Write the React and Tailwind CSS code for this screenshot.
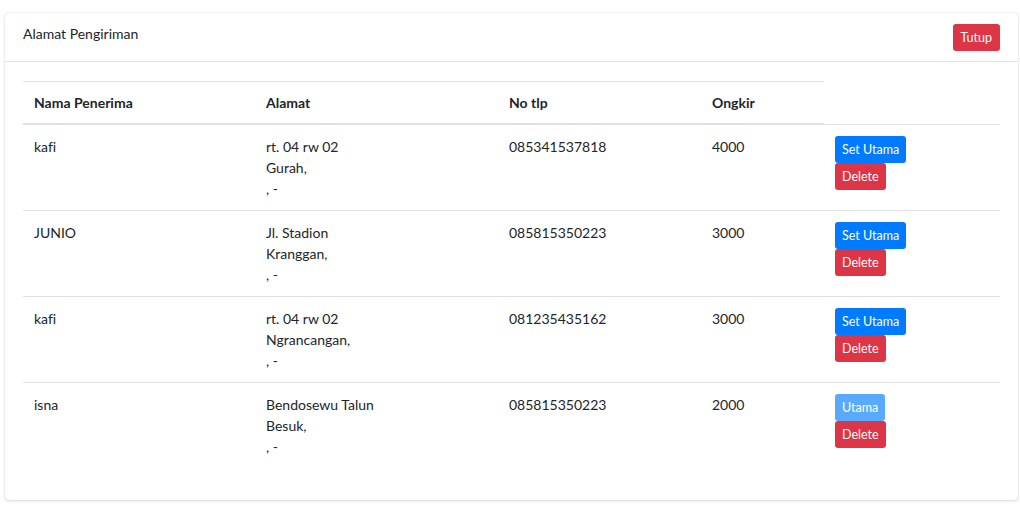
import React from "react";

const rows = [
  { nama: "kafi", alamat: ["rt. 04 rw 02", "Gurah,", ", -"], tlp: "085341537818", ongkir: "4000", utama: false },
  { nama: "JUNIO", alamat: ["Jl. Stadion", "Kranggan,", ", -"], tlp: "085815350223", ongkir: "3000", utama: false },
  { nama: "kafi", alamat: ["rt. 04 rw 02", "Ngrancangan,", ", -"], tlp: "081235435162", ongkir: "3000", utama: false },
  { nama: "isna", alamat: ["Bendosewu Talun", "Besuk,", ", -"], tlp: "085815350223", ongkir: "2000", utama: true },
];

const App = () => {
  return (
    <div className="min-h-screen w-full bg-white pt-[13px] px-[5px] text-[#212529] [font-variant-ligatures:none]" style={{ fontFamily: "Lato, 'Liberation Sans', sans-serif" }}>
      {/* Card */}
      <div className="w-[1013px] rounded-[4px] bg-white shadow-[0_0_1px_rgba(0,0,0,0.2),0_1px_3px_rgba(0,0,0,0.15)]">
        {/* Card header */}
        <div className="flex items-start justify-between border-b border-[#e3e3e3] pl-[18px] pr-[18px] pt-[11px] h-[49px]">
          <div className="text-[14px] leading-[19px]">Alamat Pengiriman</div>
          <button className="h-[27px] px-[8px] rounded-[3px] bg-[#dc3545] text-white text-[12.5px] leading-[19px]">Tutup</button>
        </div>

        {/* Card body */}
        <div className="px-[18px] pt-[19px] pb-[32px]">
          <table className="w-[977px] border-collapse text-[14px] leading-[21px]">
            <colgroup>
              <col className="w-[232px]" />
              <col className="w-[243px]" />
              <col className="w-[203px]" />
              <col className="w-[123px]" />
              <col className="w-[176px]" />
            </colgroup>
            <thead>
              <tr>
                <th className="text-left font-bold px-[11px] py-[10px] border-t border-b-2 border-[#dee2e6]">Nama Penerima</th>
                <th className="text-left font-bold px-[11px] py-[10px] border-t border-b-2 border-[#dee2e6]">Alamat</th>
                <th className="text-left font-bold px-[11px] py-[10px] border-t border-b-2 border-[#dee2e6]">No tlp</th>
                <th className="text-left font-bold px-[11px] py-[10px] border-t border-b-2 border-[#dee2e6]">Ongkir</th>
              </tr>
            </thead>
            <tbody>
              {rows.map((r, i) => (
                <tr key={i} className="border-t border-[#dee2e6] align-top">
                  <td className="px-[11px] pt-[11px] pb-[11px]">{r.nama}</td>
                  <td className="px-[11px] pt-[11px] pb-[11px]">
                    {r.alamat.map((a, j) => (
                      <div key={j}>{a}</div>
                    ))}
                  </td>
                  <td className="px-[11px] pt-[11px] pb-[11px]">{r.tlp}</td>
                  <td className="px-[11px] pt-[11px] pb-[11px]">{r.ongkir}</td>
                  <td className="px-[11px] pt-[11px] pb-[11px]">
                    <div className="flex flex-col items-start">
                      {r.utama ? (
                        <button className="h-[27px] px-[7px] rounded-[3px] bg-[#59a9ff] text-white text-[12.5px] leading-[19px]">Utama</button>
                      ) : (
                        <button className="h-[27px] px-[7px] rounded-[3px] bg-[#007bff] text-white text-[12.5px] leading-[19px]">Set Utama</button>
                      )}
                      <button className="h-[27px] px-[7px] rounded-[3px] bg-[#dc3545] text-white text-[12.5px] leading-[19px]">Delete</button>
                    </div>
                  </td>
                </tr>
              ))}
            </tbody>
          </table>
        </div>
      </div>
    </div>
  );
};

export default App;
